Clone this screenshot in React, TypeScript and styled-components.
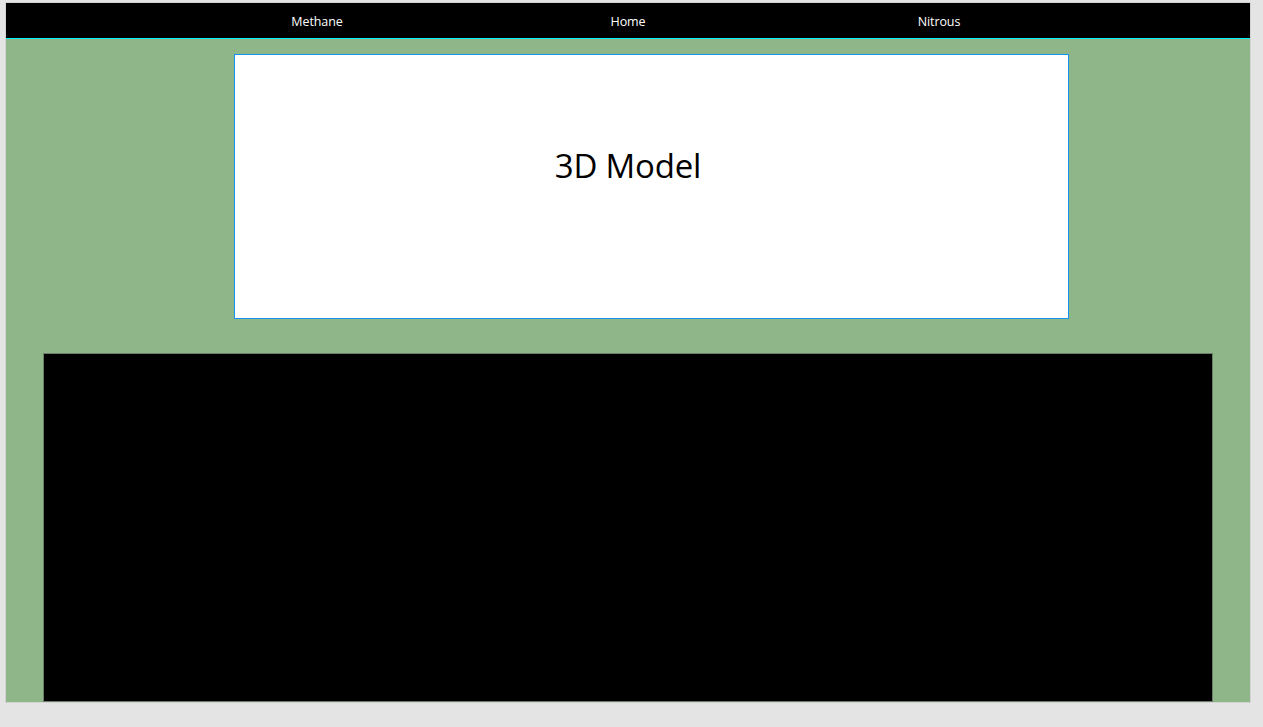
import React from "react";
import styled, { createGlobalStyle } from "styled-components";

const GlobalStyle = createGlobalStyle`
  html, body {
    margin: 0;
    padding: 0;
    background: #e4e4e4;
    font-family: "Open Sans", "Noto Sans", "Liberation Sans", sans-serif;
  }
`;

const Frame = styled.div`
  margin: 2px 0 0 5px;
  width: 1244px;
  height: 699px;
  border: 1px solid #d2d2d2;
  background: #8eb689;
  overflow: hidden;
  display: flex;
  flex-direction: column;
`;

const Nav = styled.nav`
  height: 35px;
  background: #000;
  border-bottom: 1px solid #00f0ff;
  display: grid;
  grid-template-columns: repeat(3, 1fr);
  align-items: center;
  padding: 0 155.5px;
  flex-shrink: 0;
`;

const NavLink = styled.a`
  color: #fff;
  text-decoration: none;
  text-align: center;
  font-size: 12.5px;
  letter-spacing: -0.1px;
  padding-top: 1px;
`;

const ModelSection = styled.section`
  position: relative;
  height: 314px;
  flex-shrink: 0;
`;

const ModelBox = styled.div`
  margin: 15px 0 0 228px;
  width: 833px;
  height: 263px;
  background: #fff;
  border: 1px solid #1493f0;
`;

const ModelTitle = styled.h2`
  position: absolute;
  left: 0;
  right: 0;
  top: 104px;
  margin: 0;
  text-align: center;
  font-weight: 400;
  font-size: 33px;
  letter-spacing: -0.2px;
  color: #000;
`;

const Screen = styled.div`
  margin: 0 auto;
  width: 1168px;
  flex: 1;
  background: #000;
  border: 1px solid #6d7f6a;
`;

export default function App() {
  return (
    <>
      <GlobalStyle />
      <Frame>
        <Nav>
          <NavLink href="#methane">Methane</NavLink>
          <NavLink href="#home">Home</NavLink>
          <NavLink href="#nitrous">Nitrous</NavLink>
        </Nav>
        <ModelSection>
          <ModelBox />
          <ModelTitle>3D Model</ModelTitle>
        </ModelSection>
        <Screen />
      </Frame>
    </>
  );
}
